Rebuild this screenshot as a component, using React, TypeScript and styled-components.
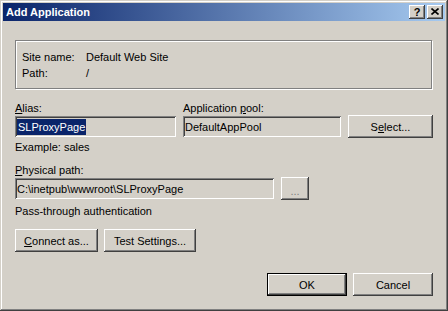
import React from "react";
import styled, { createGlobalStyle } from "styled-components";

const Global = createGlobalStyle`
  html, body { margin: 0; padding: 0; background: #d4d0c8; }
  body { font-family: "Liberation Sans", Arial, sans-serif; font-size: 11px; color: #000; }
`;

const FACE = "#d4d0c8";

const Window = styled.div`
  box-sizing: border-box;
  width: 448px;
  height: 311px;
  padding: 3px;
  background: ${FACE};
  box-shadow: inset -1px -1px #404040, inset 1px 1px ${FACE}, inset -2px -2px #808080, inset 2px 2px #fff;
  display: flex;
  flex-direction: column;
`;

const TitleBar = styled.div`
  height: 18px;
  display: flex;
  align-items: center;
  padding: 0 2px 0 3px;
  background: linear-gradient(to right, #0a246a 0%, #a6caf0 100%);
`;

const Title = styled.div`
  flex: 1;
  color: #fff;
  font-weight: bold;
  font-size: 11px;
  line-height: 18px;
`;

const CapButtons = styled.div`
  display: flex;
  gap: 2px;
`;

const CapButton = styled.div`
  width: 16px;
  height: 14px;
  box-sizing: border-box;
  background: ${FACE};
  box-shadow: inset -1px -1px #404040, inset 1px 1px #fff, inset -2px -2px #808080, inset 2px 2px ${FACE};
  display: flex;
  align-items: center;
  justify-content: center;
  font-weight: bold;
  font-size: 11px;
  line-height: 14px;
  padding-bottom: 1px;
`;

const Body = styled.div`
  flex: 1;
  display: flex;
  flex-direction: column;
  padding: 19px 12px 0 12px;
`;

const GroupBox = styled.div`
  box-sizing: border-box;
  width: 417px;
  height: 49px;
  border: 1px solid #808080;
  box-shadow: inset 1px 1px #fff, 1px 1px #fff;
  padding: 8px 6px;
  display: grid;
  grid-template-columns: 64px 1fr;
  grid-auto-rows: 16px;
  line-height: 16px;
`;

const Fields = styled.div`
  margin-top: 12px;
  display: grid;
  grid-template-columns: 161px 158px 85px;
  grid-template-rows: 14px 23px;
  column-gap: 7px;
  align-items: center;
`;

const Label = styled.div<{ $mt?: number }>`
  line-height: 14px;
  height: 14px;
  margin-top: ${(p) => p.$mt ?? 0}px;
  white-space: nowrap;
`;

const Input = styled.div<{ $w: number }>`
  box-sizing: border-box;
  width: ${(p) => p.$w}px;
  height: 21px;
  padding: 0 3px 0 2px;
  background: ${FACE};
  box-shadow: inset 1px 1px #808080, inset -1px -1px #fff, inset 2px 2px #404040, inset -2px -2px ${FACE};
  display: flex;
  align-items: center;
  line-height: 16px;
  white-space: nowrap;
  overflow: hidden;
`;

const Selected = styled.span`
  background: #0a246a;
  color: #fff;
  padding: 0 1px;
  line-height: 16px;
`;

const Button = styled.div<{ $w: number; $default?: boolean }>`
  box-sizing: border-box;
  width: ${(p) => p.$w}px;
  height: 23px;
  background: ${FACE};
  border: ${(p) => (p.$default ? "1px solid #000" : "none")};
  box-shadow: inset -1px -1px #404040, inset 1px 1px #fff, inset -2px -2px #808080, inset 2px 2px ${FACE};
  display: flex;
  align-items: center;
  justify-content: center;
  line-height: 14px;
  white-space: nowrap;
`;

const Row = styled.div<{ $mt: number; $gap: number; $end?: boolean }>`
  display: flex;
  align-items: center;
  gap: ${(p) => p.$gap}px;
  margin-top: ${(p) => p.$mt}px;
  justify-content: ${(p) => (p.$end ? "flex-end" : "flex-start")};
`;

const Ellipsis = styled.span`
  color: #808080;
  padding-top: 4px;
`;

export default function App() {
  return (
    <>
      <Global />
      <Window>
        <TitleBar>
          <Title>Add Application</Title>
          <CapButtons>
            <CapButton>?</CapButton>
            <CapButton>
              <svg width="8" height="7" viewBox="0 0 8 7">
                <path d="M0.5 0.5 L7.5 6.5 M7.5 0.5 L0.5 6.5" stroke="#000" strokeWidth="1.6" />
              </svg>
            </CapButton>
          </CapButtons>
        </TitleBar>
        <Body>
          <GroupBox>
            <div>Site name:</div>
            <div>Default Web Site</div>
            <div>Path:</div>
            <div>/</div>
          </GroupBox>
          <Fields>
            <Label>
              <u>A</u>lias:
            </Label>
            <Label>
              Application <u>p</u>ool:
            </Label>
            <div />
            <Input $w={161}>
              <Selected>SLProxyPage</Selected>
            </Input>
            <Input $w={158}>DefaultAppPool</Input>
            <Button $w={85}>
              <span>
                S<u>e</u>lect...
              </span>
            </Button>
          </Fields>
          <Label $mt={2}>Example: sales</Label>
          <Label $mt={9}>
            <u>P</u>hysical path:
          </Label>
          <Row $mt={0} $gap={7}>
            <Input $w={259}>C:\inetpub\wwwroot\SLProxyPage</Input>
            <Button $w={28}>
              <Ellipsis>...</Ellipsis>
            </Button>
          </Row>
          <Label $mt={4}>Pass-through authentication</Label>
          <Row $mt={11} $gap={6}>
            <Button $w={83}>
              <span>
                <u>C</u>onnect as...
              </span>
            </Button>
            <Button $w={92}>
              <span>
                Test Settin<u>g</u>s...
              </span>
            </Button>
          </Row>
          <Row $mt={21} $gap={6} $end>
            <Button $w={80} $default>
              OK
            </Button>
            <Button $w={80}>Cancel</Button>
          </Row>
        </Body>
      </Window>
    </>
  );
}
